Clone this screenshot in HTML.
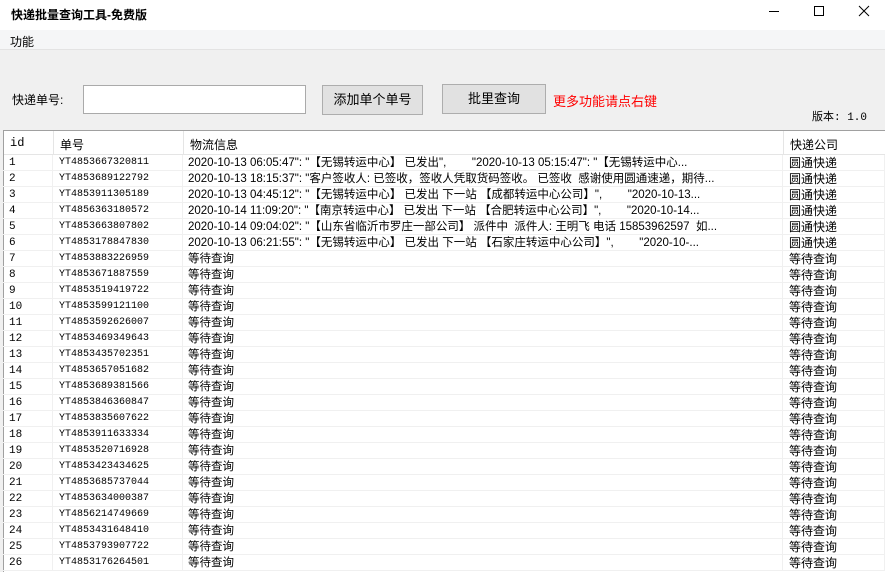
<!DOCTYPE html>
<html><head><meta charset="utf-8"><style>
*{margin:0;padding:0;box-sizing:border-box}
body{width:885px;height:572px;overflow:hidden;background:#f0f0f0;font-family:"Liberation Sans","Noto Sans CJK SC",sans-serif;font-size:12px;color:#000;position:relative}
.title{position:absolute;left:0;top:0;width:885px;height:30px;background:#fff}
.title b{position:absolute;left:11px;top:6px;font-size:12px;font-weight:bold}
.menu{position:absolute;left:0;top:30px;width:885px;height:20px;background:#f5f6f7;border-bottom:1px solid #e3e3e3}
.menu span{position:absolute;left:10px;top:3px}
.lbl{position:absolute;left:12px;top:91px}
.inp{position:absolute;left:83px;top:85px;width:223px;height:29px;background:#fff;border:1px solid #aaa}
.btn{position:absolute;height:30px;background:#e1e1e1;border:1px solid #adadad;text-align:center;line-height:28px;font-size:13px}
.red{position:absolute;left:553px;top:91px;color:#f00;font-size:13px}
.ver{position:absolute;left:812px;top:108px;font-family:"Liberation Mono","Noto Sans CJK SC",monospace;font-size:11px}
.tbl{position:absolute;left:3px;top:130px;width:882px;height:442px;background:#fff;border-left:1px solid #a0a0a0;border-top:1px solid #a0a0a0}
.hd{position:absolute;top:0;height:24px;border-right:1px solid #e5e5e5;border-bottom:1px solid #e5e5e5;padding:5px 0 0 6px;font-size:12px}
.row{position:absolute;left:0;width:882px;height:16px;border-bottom:1px solid #f0f0f0}
.row div{position:absolute;top:0;height:16px;line-height:16px;white-space:pre;overflow:hidden;border-right:1px solid #f0f0f0}
.c1{left:0;width:50px;padding-left:6px;font-family:"Liberation Mono",monospace;font-size:11px}
.c2{left:50px;width:130px;padding-left:6px;font-family:"Liberation Mono",monospace;font-size:10px}
.c3{left:180px;width:600px;padding-left:5px;font-size:11.5px}
.c4{left:780px;width:102px;padding-left:6px}
</style></head><body>
<div class="title"><b>快递批量查询工具-免费版</b>
<svg style="position:absolute;left:768px;top:5px" width="110" height="16"><line x1="1" y1="6.5" x2="11" y2="6.5" stroke="#000"/><rect x="46.5" y="1.5" width="9" height="9" fill="none" stroke="#000"/><path d="M91 1L101 11M101 1L91 11" stroke="#000"/></svg></div>
<div class="menu"><span>功能</span></div>
<div class="lbl">快递单号:</div>
<div class="inp"></div>
<div class="btn" style="left:322px;top:85px;width:101px">添加单个单号</div>
<div class="btn" style="left:442px;top:84px;width:104px">批里查询</div>
<div class="red">更多功能请点右键</div>
<div class="ver">版本: 1.0</div>
<div class="tbl">
<div class="hd" style="left:0;width:50px;font-family:'Liberation Mono',monospace">id</div>
<div class="hd" style="left:50px;width:130px">单号</div>
<div class="hd" style="left:180px;width:600px">物流信息</div>
<div class="hd" style="left:780px;width:102px">快递公司</div>
<div id="rows"></div>
</div>
<div style="position:absolute;left:3px;top:155px;width:882px">
<div class="row" style="top:0"><div class="c1">1</div><div class="c2">YT4853667320811</div><div class="c3">2020-10-13 06:05:47": "【无锡转运中心】 已发出",        "2020-10-13 05:15:47": "【无锡转运中心...</div><div class="c4">圆通快递</div></div>
<div class="row" style="top:16px"><div class="c1">2</div><div class="c2">YT4853689122792</div><div class="c3">2020-10-13 18:15:37": "客户签收人: 已签收，签收人凭取货码签收。 已签收  感谢使用圆通速递，期待...</div><div class="c4">圆通快递</div></div>
<div class="row" style="top:32px"><div class="c1">3</div><div class="c2">YT4853911305189</div><div class="c3">2020-10-13 04:45:12": "【无锡转运中心】 已发出 下一站 【成都转运中心公司】",        "2020-10-13...</div><div class="c4">圆通快递</div></div>
<div class="row" style="top:48px"><div class="c1">4</div><div class="c2">YT4856363180572</div><div class="c3">2020-10-14 11:09:20": "【南京转运中心】 已发出 下一站 【合肥转运中心公司】",        "2020-10-14...</div><div class="c4">圆通快递</div></div>
<div class="row" style="top:64px"><div class="c1">5</div><div class="c2">YT4853663807802</div><div class="c3">2020-10-14 09:04:02": "【山东省临沂市罗庄一部公司】 派件中  派件人: 王明飞 电话 15853962597  如...</div><div class="c4">圆通快递</div></div>
<div class="row" style="top:80px"><div class="c1">6</div><div class="c2">YT4853178847830</div><div class="c3">2020-10-13 06:21:55": "【无锡转运中心】 已发出 下一站 【石家庄转运中心公司】",        "2020-10-...</div><div class="c4">圆通快递</div></div>
<div class="row" style="top:96px"><div class="c1">7</div><div class="c2">YT4853883226959</div><div class="c3">等待查询</div><div class="c4">等待查询</div></div>
<div class="row" style="top:112px"><div class="c1">8</div><div class="c2">YT4853671887559</div><div class="c3">等待查询</div><div class="c4">等待查询</div></div>
<div class="row" style="top:128px"><div class="c1">9</div><div class="c2">YT4853519419722</div><div class="c3">等待查询</div><div class="c4">等待查询</div></div>
<div class="row" style="top:144px"><div class="c1">10</div><div class="c2">YT4853599121100</div><div class="c3">等待查询</div><div class="c4">等待查询</div></div>
<div class="row" style="top:160px"><div class="c1">11</div><div class="c2">YT4853592626007</div><div class="c3">等待查询</div><div class="c4">等待查询</div></div>
<div class="row" style="top:176px"><div class="c1">12</div><div class="c2">YT4853469349643</div><div class="c3">等待查询</div><div class="c4">等待查询</div></div>
<div class="row" style="top:192px"><div class="c1">13</div><div class="c2">YT4853435702351</div><div class="c3">等待查询</div><div class="c4">等待查询</div></div>
<div class="row" style="top:208px"><div class="c1">14</div><div class="c2">YT4853657051682</div><div class="c3">等待查询</div><div class="c4">等待查询</div></div>
<div class="row" style="top:224px"><div class="c1">15</div><div class="c2">YT4853689381566</div><div class="c3">等待查询</div><div class="c4">等待查询</div></div>
<div class="row" style="top:240px"><div class="c1">16</div><div class="c2">YT4853846360847</div><div class="c3">等待查询</div><div class="c4">等待查询</div></div>
<div class="row" style="top:256px"><div class="c1">17</div><div class="c2">YT4853835607622</div><div class="c3">等待查询</div><div class="c4">等待查询</div></div>
<div class="row" style="top:272px"><div class="c1">18</div><div class="c2">YT4853911633334</div><div class="c3">等待查询</div><div class="c4">等待查询</div></div>
<div class="row" style="top:288px"><div class="c1">19</div><div class="c2">YT4853520716928</div><div class="c3">等待查询</div><div class="c4">等待查询</div></div>
<div class="row" style="top:304px"><div class="c1">20</div><div class="c2">YT4853423434625</div><div class="c3">等待查询</div><div class="c4">等待查询</div></div>
<div class="row" style="top:320px"><div class="c1">21</div><div class="c2">YT4853685737044</div><div class="c3">等待查询</div><div class="c4">等待查询</div></div>
<div class="row" style="top:336px"><div class="c1">22</div><div class="c2">YT4853634000387</div><div class="c3">等待查询</div><div class="c4">等待查询</div></div>
<div class="row" style="top:352px"><div class="c1">23</div><div class="c2">YT4856214749669</div><div class="c3">等待查询</div><div class="c4">等待查询</div></div>
<div class="row" style="top:368px"><div class="c1">24</div><div class="c2">YT4853431648410</div><div class="c3">等待查询</div><div class="c4">等待查询</div></div>
<div class="row" style="top:384px"><div class="c1">25</div><div class="c2">YT4853793907722</div><div class="c3">等待查询</div><div class="c4">等待查询</div></div>
<div class="row" style="top:400px"><div class="c1">26</div><div class="c2">YT4853176264501</div><div class="c3">等待查询</div><div class="c4">等待查询</div></div>
</div>
</body></html>
